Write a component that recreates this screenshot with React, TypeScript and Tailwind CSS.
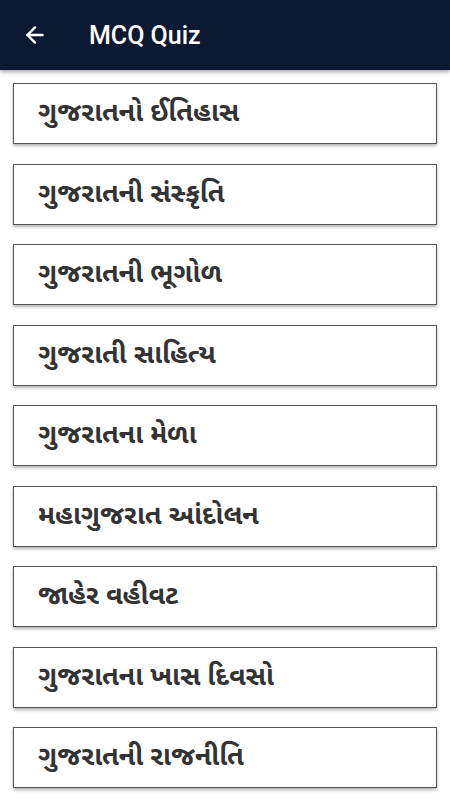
import { ArrowLeft } from 'lucide-react'

const items = [
  'ગુજરાતનો ઈતિહાસ',
  'ગુજરાતની સંસ્કૃતિ',
  'ગુજરાતની ભૂગોળ',
  'ગુજરાતી સાહિત્ય',
  'ગુજરાતના મેળા',
  'મહાગુજરાત આંદોલન',
  'જાહેર વહીવટ',
  'ગુજરાતના ખાસ દિવસો',
  'ગુજરાતની રાજનીતિ',
]

export default function App() {
  return (
    <div className="w-[450px] h-[800px] overflow-hidden bg-white font-['Roboto',sans-serif]">
      <div className="h-[70px] bg-[#0b1a31] flex items-center shadow-[0_2px_4px_rgba(0,0,0,0.35)] relative z-10">
        <ArrowLeft className="ml-[22px] text-white" size={26} strokeWidth={2.2} />
        <span className="ml-[41px] pt-[2px] text-white text-[25px] font-medium">MCQ Quiz</span>
      </div>
      <div className="flex flex-col gap-[19.5px] px-[13px] pt-[13px]">
        {items.map(t => (
          <div
            key={t}
            className="h-[61px] border border-[#555] bg-white flex items-center pl-[24px] pt-[4px] shadow-[0_2px_3px_rgba(0,0,0,0.3)]"
          >
            <span className="text-[27px] font-bold text-[#333] font-['Noto_Sans_Gujarati','Lohit_Gujarati','Noto_Sans',sans-serif]">
              {t}
            </span>
          </div>
        ))}
      </div>
    </div>
  )
}
